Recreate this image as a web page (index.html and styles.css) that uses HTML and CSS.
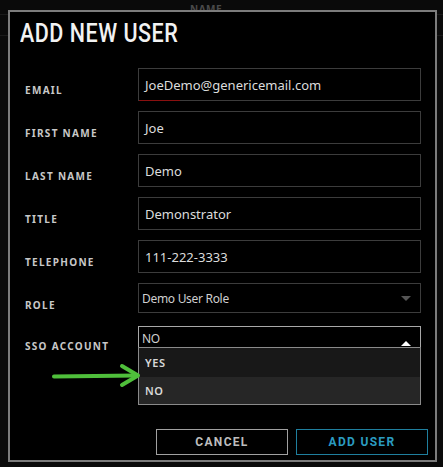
FILE: index.html
```html
<!DOCTYPE html>
<html lang="en">
<head>
<meta charset="utf-8">
<title>Add New User</title>
<link rel="stylesheet" href="styles.css">
</head>
<body>
<div class="backdrop">
  <div class="bg-head">NAME</div>
  <div class="bg-line l1"></div>
  <div class="bg-line l2"></div>
</div>
<div class="modal">
  <h1 class="modal-title"><span class="title-text">ADD NEW USER</span></h1>
  <form class="form">
    <div class="row">
      <label class="label">EMAIL</label>
      <div class="field"><span class="value">JoeDemo@genericemail.com</span><span class="spell"></span></div>
    </div>
    <div class="row">
      <label class="label">FIRST NAME</label>
      <div class="field"><span class="value">Joe</span></div>
    </div>
    <div class="row">
      <label class="label">LAST NAME</label>
      <div class="field"><span class="value">Demo</span></div>
    </div>
    <div class="row">
      <label class="label">TITLE</label>
      <div class="field"><span class="value">Demonstrator</span></div>
    </div>
    <div class="row">
      <label class="label">TELEPHONE</label>
      <div class="field"><span class="value">111-222-3333</span></div>
    </div>
    <div class="row">
      <label class="label">ROLE</label>
      <div class="field select role"><span class="small-value">Demo User Role</span><span class="caret down"></span></div>
    </div>
    <div class="row sso">
      <label class="label">SSO ACCOUNT</label>
      <div class="select-wrap">
        <div class="field select open"><span class="small-value sso-value">NO</span><span class="caret up"></span></div>
        <ul class="menu">
          <li class="opt opt-yes">YES</li>
          <li class="opt opt-no">NO</li>
        </ul>
      </div>
    </div>
    <div class="actions">
      <button type="button" class="btn btn-cancel">CANCEL</button>
      <button type="button" class="btn btn-add">ADD USER</button>
    </div>
  </form>
  <svg class="arrow" width="100" height="30" viewBox="0 0 100 30">
    <path d="M2 16.5 L84 15.5" stroke="#4fbf3b" stroke-width="4" stroke-linecap="round" fill="none"/>
    <path d="M70 6 L86 15.5 L70 25" stroke="#4fbf3b" stroke-width="4" stroke-linecap="round" stroke-linejoin="round" fill="none"/>
  </svg>
</div>
</body>
</html>
```
FILE: styles.css
```css
* { box-sizing: border-box; margin: 0; padding: 0; }
html, body { width: 443px; height: 467px; overflow: hidden; }
body {
  background: #0a0a0a;
  font-family: "Noto Sans", "DejaVu Sans", sans-serif;
  color: #ddd;
  position: relative;
}
.backdrop { position: absolute; inset: 0; }
.bg-head {
  position: absolute; left: 190px; top: 2px;
  font-size: 10px; font-weight: 700; letter-spacing: 0.5px; color: #4a4a4a;
}
.bg-line { position: absolute; left: 0; right: 0; height: 1px; background: #1a1a1a; }
.bg-line.l1 { top: 14px; }
.bg-line.l2 { top: 35px; }

.modal {
  position: absolute;
  left: 8px; top: 10px;
  width: 429px; height: 452px;
  background: #000;
  border: 2px solid #7c7c7c;
  padding: 9px 14px 0 15px;
}
.modal-title {
  font-family: "Roboto", "Noto Sans", sans-serif;
  font-weight: 500;
  font-size: 25px;
  line-height: 26px;
  color: #f2f2f2;
  margin-left: -5px;
  white-space: nowrap;
}
.title-text { display: inline-block; transform: scaleX(0.86); transform-origin: left center; letter-spacing: 0.6px; }
.form { margin-top: 21px; display: flex; flex-direction: column; gap: 10px; }
.row { display: grid; grid-template-columns: 113px 283px; align-items: end; height: 33px; }
.label {
  font-size: 10px; font-weight: 700; letter-spacing: 1.3px; color: #c8c8c8;
  line-height: 12px; padding-bottom: 5px;
}
.field {
  position: relative;
  height: 33px;
  border: 1px solid #3c3c3c;
  display: flex; align-items: center;
  padding-left: 6px;
}
.value { font-size: 13px; color: #dcdcdc; }
.spell { position: absolute; left: 0; bottom: -1px; width: 41px; height: 1px; background: #8a1010; }
.select { justify-content: space-between; padding: 0 9px 0 3px; }
.role { height: 30px; margin-bottom: 3px; }
.small-value { font-size: 12px; color: #cfcfcf; letter-spacing: -0.3px; }
.caret { width: 0; height: 0; border-left: 5px solid transparent; border-right: 5px solid transparent; }
.caret.down { border-top: 5px solid #555; }
.caret.up { border-bottom: 5px solid #fff; margin-top: 4px; }

.row.sso { align-items: start; height: 77px; }
.row.sso .label { padding-top: 14px; }
.select-wrap { display: flex; flex-direction: column; }
.select.open { height: 21px; border: 1px solid #a8a8a8; border-bottom: none; align-items: flex-end; padding-bottom: 1px; }
.sso-value { line-height: 14px; }
.menu { list-style: none; border: 1px solid #8a8a8a; }
.opt { font-size: 11px; font-weight: 600; letter-spacing: 0.6px; color: #d8d8d8; padding-left: 6px; display: flex; align-items: center; }
.opt-yes { height: 29px; background: #181818; }
.opt-no { height: 27px; background: #262626; }

.actions { display: flex; justify-content: flex-end; gap: 8px; margin-top: 16px; margin-right: -7px; }
.btn {
  width: 132px; height: 26px; background: #000;
  font-family: "Roboto", "Noto Sans", sans-serif;
  font-size: 12px; font-weight: 700; letter-spacing: 1.3px;
  cursor: pointer;
}
.btn-cancel { border: 1px solid #a0a0a0; color: #bdbdbd; }
.btn-add { border: 1px solid #1f7f9e; color: #2b9cc0; }

.arrow { position: absolute; left: 42px; top: 348px; }
```
